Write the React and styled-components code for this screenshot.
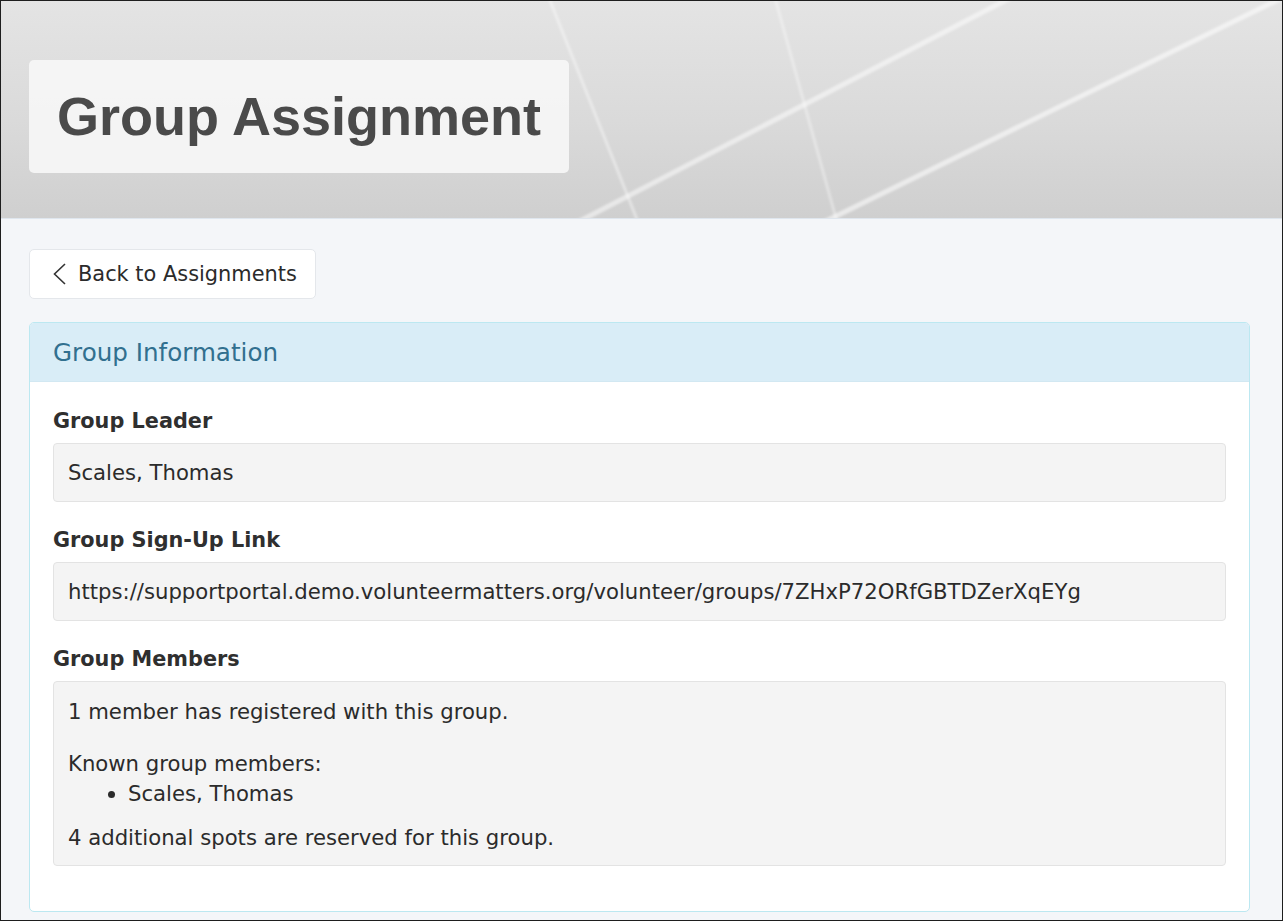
import React from "react";
import styled, { createGlobalStyle } from "styled-components";

const GlobalStyle = createGlobalStyle`
  html, body {
    margin: 0;
    padding: 0;
  }
  body {
    font-family: "DejaVu Sans", Verdana, sans-serif;
    color: #333;
    background: #f4f6f9;
  }
  * {
    box-sizing: border-box;
  }
`;

const Frame = styled.div`
  height: 100vh;
  border: 1px solid #1e1e1e;
  background: #f4f6f9;
  overflow: hidden;
`;

const Banner = styled.header`
  position: relative;
  height: 218px;
  padding: 59px 0 0 28px;
  background: linear-gradient(180deg, #e4e4e4 0%, #dadada 55%, #cfcfcf 100%);
  border-bottom: 1px solid #dfe6ee;
  overflow: hidden;
`;

const BannerArt = styled.svg`
  position: absolute;
  left: -1px;
  top: -1px;
  width: 1283px;
  height: 220px;
  pointer-events: none;
`;

const TitleBox = styled.div`
  position: relative;
  display: inline-flex;
  align-items: center;
  height: 113px;
  padding: 0 28px;
  border-radius: 5px;
  background: rgba(246, 246, 246, 0.92);
`;

const Title = styled.h1`
  margin: 0;
  font-family: "Liberation Sans", Arial, sans-serif;
  font-weight: 700;
  font-size: 54px;
  line-height: 1;
  color: #4a4a4a;
  padding-bottom: 2px;
`;

const Main = styled.main`
  padding: 30px 32px 0 28px;
`;

const BackButton = styled.button`
  display: inline-flex;
  align-items: center;
  gap: 11px;
  height: 50px;
  padding: 0 18px 0 23px;
  margin-bottom: 23px;
  border: 1px solid #e4e7eb;
  border-radius: 5px;
  background: #fff;
  font-family: "DejaVu Sans", Verdana, sans-serif;
  font-size: 20.9px;
  color: #2b2b2b;
  cursor: pointer;
`;

const Panel = styled.section`
  border: 1px solid #bce8f1;
  border-radius: 5px;
  background: #fff;
  overflow: hidden;
`;

const PanelHeading = styled.div`
  height: 59px;
  display: flex;
  align-items: center;
  padding: 0 23px;
  background: #d9edf7;
  border-bottom: 1px solid #d2e8f2;
  color: #31708f;
  font-size: 24.6px;
`;

const PanelBody = styled.div`
  padding: 26px 23px 20px;
`;

const Label = styled.div`
  font-weight: 700;
  font-size: 20.8px;
  line-height: 26px;
  color: #2f2f2f;
  margin-bottom: 9px;
`;

const Field = styled.div`
  background: #f4f4f4;
  border: 1px solid #e3e3e3;
  border-radius: 4px;
  padding: ${(p) => (p.$tall ? "15px 14px 12px" : "14px 14px 13px")};
  min-height: 59px;
  font-size: 21.2px;
  line-height: 30px;
  color: #2b2b2b;
  margin-bottom: 25px;
`;

const Para = styled.p`
  margin: 0 0 ${(p) => p.$gap || 0}px;
`;

const MemberList = styled.ul`
  margin: 0 0 14px;
  padding-left: 60px;
  list-style: disc;
`;

const Chevron = () => (
  <svg width="14" height="22" viewBox="0 0 14 22" fill="none">
    <path d="M12 1 L1.5 11 L12 21" stroke="#333" strokeWidth="1.6" />
  </svg>
);

export default function App() {
  return (
    <>
      <GlobalStyle />
      <Frame>
        <Banner>
          <BannerArt viewBox="0 0 1283 220" preserveAspectRatio="none">
            <defs>
              <filter id="soft" x="-5%" y="-5%" width="110%" height="110%">
                <feGaussianBlur stdDeviation="1" />
              </filter>
            </defs>
            <g filter="url(#soft)" strokeLinecap="round">
              <line x1="549" y1="-2" x2="638" y2="222" stroke="rgba(255,255,255,0.4)" strokeWidth="3" />
              <line x1="775" y1="-2" x2="837" y2="222" stroke="rgba(255,255,255,0.35)" strokeWidth="3" />
              <line x1="578" y1="222" x2="1010" y2="-2" stroke="rgba(255,255,255,0.5)" strokeWidth="5" />
              <line x1="824" y1="222" x2="1290" y2="-6" stroke="rgba(255,255,255,0.55)" strokeWidth="5" />
            </g>
          </BannerArt>
          <TitleBox>
            <Title>Group Assignment</Title>
          </TitleBox>
        </Banner>
        <Main>
          <BackButton type="button">
            <Chevron />
            Back to Assignments
          </BackButton>
          <Panel>
            <PanelHeading>Group Information</PanelHeading>
            <PanelBody>
              <Label>Group Leader</Label>
              <Field>Scales, Thomas</Field>
              <Label>Group Sign-Up Link</Label>
              <Field>
                https://supportportal.demo.volunteermatters.org/volunteer/groups/7ZHxP72ORfGBTDZerXqEYg
              </Field>
              <Label>Group Members</Label>
              <Field $tall>
                <Para $gap={22}>1 member has registered with this group.</Para>
                <Para>Known group members:</Para>
                <MemberList>
                  <li>Scales, Thomas</li>
                </MemberList>
                <Para>4 additional spots are reserved for this group.</Para>
              </Field>
            </PanelBody>
          </Panel>
        </Main>
      </Frame>
    </>
  );
}
